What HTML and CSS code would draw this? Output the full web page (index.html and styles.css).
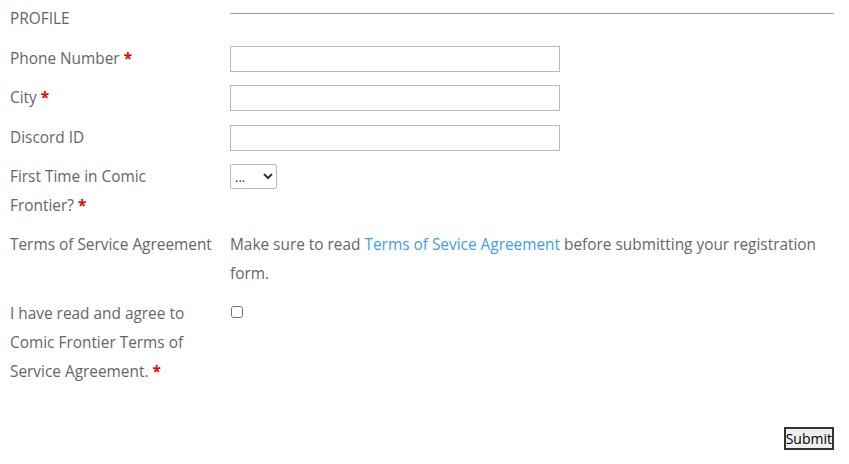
FILE: index.html
```html
<!DOCTYPE html>
<html lang="en">
<head>
    <meta charset="UTF-8">
    <meta name="viewport" content="width=device-width, initial-scale=1.0">
    <title>Registration</title>
    <link rel="stylesheet" href="styles.css">
</head>
<body>
    <form class="reg-form">
        <div class="row">
            <div class="label">PROFILE</div>
            <div class="field"><hr class="divider"></div>
        </div>

        <div class="row">
            <label class="label" for="phone">Phone Number&nbsp;<span class="req">*</span></label>
            <div class="field"><input type="text" id="phone" class="text-input"></div>
        </div>

        <div class="row">
            <label class="label" for="city">City&nbsp;<span class="req">*</span></label>
            <div class="field"><input type="text" id="city" class="text-input"></div>
        </div>

        <div class="row">
            <label class="label" for="discord">Discord ID</label>
            <div class="field"><input type="text" id="discord" class="text-input"></div>
        </div>

        <div class="row">
            <label class="label" for="firstTime">First Time in Comic Frontier?&nbsp;<span class="req">*</span></label>
            <div class="field">
                <select id="firstTime" class="select-input">
                    <option>...</option>
                    <option>Yes</option>
                    <option>No</option>
                </select>
            </div>
        </div>

        <div class="row">
            <div class="label">Terms of Service Agreement</div>
            <div class="field">
                Make sure to read <a href="#" class="link">Terms of Sevice Agreement</a> before submitting your registration form.
            </div>
        </div>

        <div class="row agree-row">
            <label class="label" for="agree">I have read and agree to Comic Frontier Terms of Service Agreement.&nbsp;<span class="req">*</span></label>
            <div class="field"><input type="checkbox" id="agree" class="check"></div>
        </div>

        <div class="actions">
            <button type="submit" class="submit-btn">Submit</button>
        </div>
    </form>
</body>
</html>
```

FILE: styles.css
```css
body {
    margin: 0;
    font-family: 'Open Sans', sans-serif;
    font-size: 15.4px;
    line-height: 28.5px;
    color: #666;
    background-color: white;
}
.reg-form {
    padding: 5px 15px 0 10px;
}
.row {
    display: flex;
    margin-bottom: 11px;
}
.agree-row {
    line-height: 29px;
}
.label {
    width: 210px;
    flex-shrink: 0;
    margin-right: 10px;
}
.field {
    flex: 1;
    min-width: 0;
}
.divider {
    margin: 8px 0 0 0;
    border: none;
    border-top: 1px solid #999;
}
.req {
    color: #e00;
    font-weight: bold;
}
.text-input {
    box-sizing: border-box;
    width: 330px;
    height: 26px;
    margin-top: 1px;
    border: 1px solid #bbb;
    padding: 2px 6px;
    font-family: 'Open Sans', sans-serif;
    font-size: 14px;
    vertical-align: top;
}
.select-input {
    margin-top: 1px;
    height: 25px;
    width: 47px;
    font-family: 'Open Sans', sans-serif;
    font-size: 13px;
    color: #333;
    border: 1px solid #bbb;
    border-radius: 2px;
    background-color: white;
    vertical-align: top;
}
.link {
    color: #409df0;
    text-decoration: none;
}
.check {
    margin: 7px 0 0 1px;
    width: 12px;
    height: 12px;
    vertical-align: top;
}
.actions {
    display: flex;
    justify-content: flex-end;
    margin-top: 41px;
}
.submit-btn {
    font-family: 'Open Sans', sans-serif;
    font-size: 14px;
    line-height: 19px;
    padding: 0 0;
    color: black;
    background-color: #efefef;
    border: 2px solid #333;
    border-radius: 0;
}
```
